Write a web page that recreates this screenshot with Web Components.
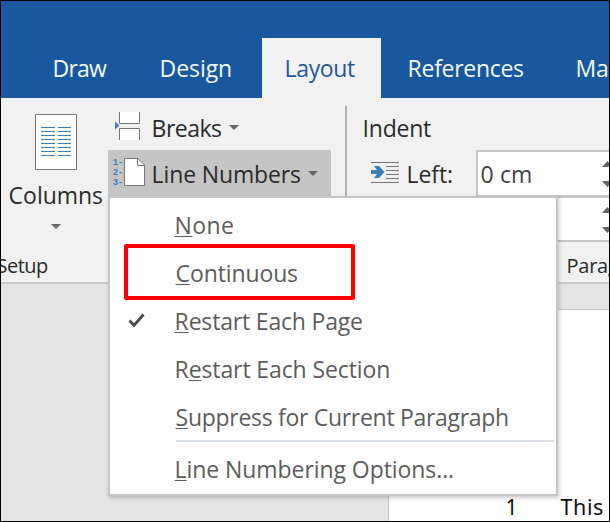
<!DOCTYPE html>
<html lang="en"><head><meta charset="utf-8"><title>Layout ribbon</title>
<style>html,body{margin:0;height:522px;overflow:hidden;background:#000}</style></head><body>
<word-window></word-window>
<script>
const define=(name,html,setup)=>customElements.define(name,class extends HTMLElement{
  connectedCallback(){
    if(this.shadowRoot)return;
    const t=document.createElement('template');t.innerHTML=html;
    this.attachShadow({mode:'open'}).append(t.content.cloneNode(true));
    if(setup)setup(this,this.shadowRoot);
  }
});
const pen=document.createElement('canvas').getContext('2d');

/* Text label: "ink" is the drawn width, "size" the font size, "line" the line height */
define('fit-label',`<style>:host{display:block;flex:none;white-space:pre;font-family:"Open Sans","Noto Sans",sans-serif}span{display:block}</style><span><slot></slot></span>`,(h,r)=>{
  const size=+h.getAttribute('size')||23,ink=+h.getAttribute('ink'),text=h.textContent;
  const span=r.querySelector('span');
  const family=h.getAttribute('face')||'"Open Sans","Noto Sans",sans-serif';
  pen.font=size+'px '+family;
  const m=pen.measureText(text),drawn=m.actualBoundingBoxRight+m.actualBoundingBoxLeft;
  span.style.cssText=`font:${size}px/${h.getAttribute('line')||48}px ${family};margin-left:${m.actualBoundingBoxLeft+.6}px;letter-spacing:${(ink-drawn-.5)/(text.length-1||1)}px`;
  h.style.width=ink+'px';
});
define('drop-arrow',`<style>:host{display:block;flex:none;width:10px;height:5px}svg{display:block}</style><svg width="10" height="5"><path d="M0 0H10L5 5Z" fill="#666"/></svg>`);
define('ribbon-tab',`<style>:host{display:block;box-sizing:border-box;flex:none;height:60px;color:#f4f8fd;padding-top:6px}:host([active]){background:#f2f2f2;color:#1f58a0}</style><slot></slot>`);
define('tab-strip',`<style>:host{display:flex;height:97px;box-sizing:border-box;padding-top:37px;background:#19589f;overflow:hidden}
ribbon-tab{padding-left:25px}.a{width:107px;margin-left:28px}.b{width:126px}.c{width:119px;padding-left:24px}.d{width:168px;padding-left:28px}</style>
<ribbon-tab class="a"><fit-label ink="53">Draw</fit-label></ribbon-tab><ribbon-tab class="b"><fit-label ink="70">Design</fit-label></ribbon-tab><ribbon-tab class="c" active><fit-label ink="69">Layout</fit-label></ribbon-tab><ribbon-tab class="d"><fit-label ink="114">References</fit-label></ribbon-tab><ribbon-tab style="padding-left:28px"><fit-label ink="84">Mailings</fit-label></ribbon-tab>`);
define('columns-button',`<style>:host{display:flex;flex-direction:column;width:107px;flex:none;padding-top:16px}svg{margin-left:34px;flex:none}fit-label{margin:1px 0 0 8px}drop-arrow{margin:5px 0 0 50px}</style>
<svg width="42" height="56"><path d="M.5 .5h41v55h-41z" fill="#fff" stroke="#777"/><path d="M6 13.5h14m3 0h13M6 17.5h14m3 0h13M6 21.5h14m3 0h13M6 25.5h14m3 0h13M6 29.5h14m3 0h13M6 33.5h14m3 0h13M6 37.5h14m3 0h13M6 41.5h14m3 0h13" stroke="#3b7fb9"/></svg>
<fit-label ink="93">Columns</fit-label><drop-arrow></drop-arrow>`);
define('ribbon-button',`<style>:host{display:flex;height:46px;width:223px;position:relative}:host([pressed]){background:#c5c5c5}slot[name=icon]{display:block;width:45px;flex:none}::slotted(svg){display:block;margin-right:1px}drop-arrow{margin:21px 0 0 8px}</style><slot name="icon"></slot><slot></slot><drop-arrow></drop-arrow>`);
define('number-field',`<style>:host{display:flex;box-sizing:border-box;height:47px;width:133px;flex:none;border:2px solid #c6c6c6;border-right:0;background:#fefefe;color:#444}svg{flex:none;margin:9px 0 0 auto}</style><slot></slot><svg width="7" height="27"><path d="M0 6L5.5 0L11 6ZM0 20H11L5.5 26Z" fill="#666"/></svg>`);
define('ribbon-body',`<style>:host{display:grid;grid-template-columns:344px 2px 1fr;height:184px;background:#f1f1f1;border-bottom:2px solid #cbcbcb;color:#2b2b2b;overflow:hidden}
section{display:grid;grid-template-rows:144px 40px;overflow:hidden;min-width:0}.row{display:flex}.stack{padding-top:6px}i{background:#b1b1b1;margin-top:8px}
.setup{margin-left:-4px}.indent{padding-left:17px}.field{display:flex;height:46px}.field svg{margin:12px 0 0 24px;flex:none}.field fit-label{margin-left:9px}.field number-field{margin-left:24px}.field number-field fit-label{margin:-2px 0 0 3px}.second{margin-left:129px;height:46px}.head{height:46px}</style>
<section><div class="row"><columns-button></columns-button><div class="stack">
<ribbon-button><svg slot="icon" width="44" height="46"><path d="M11.5 8v11.5h20V8M11.5 36V24.500h20V36" fill="#fefefe" stroke="#777"/><path d="M7 17.500L11.500 21.500L7 25.500Z" fill="#3b7fb9"/></svg><fit-label ink="68">Breaks</fit-label></ribbon-button>
<ribbon-button pressed><svg slot="icon" width="44" height="46"><g fill="#3b7fb9" font-family="Liberation Sans" font-size="9" font-weight="700"><text x="5" y="14.500" textLength="9">1-</text><text x="5" y="24.700" textLength="9">2-</text><text x="5" y="34.900" textLength="9">3-</text></g><path d="M16.500 8.500H30L36.500 15V35.500H16.500Z" fill="#fefefe" stroke="#777"/><path d="M29.500 8.500V15.500H36.500" fill="none" stroke="#777"/></svg><fit-label ink="147">Line Numbers</fit-label></ribbon-button>
</div></div><fit-label class="setup" size="20" ink="51" line="48">Setup</fit-label></section>
<i></i>
<section><div class="stack"><div class="head"><fit-label class="indent" ink="67">Indent</fit-label></div>
<div class="field"><svg width="28" height="21"><path d="M0 .5h28M15 4.500h13M15 8.500h13M15 12.500h13M15 16.500h13M0 20.500h28" stroke="#777"/><path d="M0 8H6L3 4H8L13.500 10L8 16H3L6 12H0Z" fill="#3b7fb9"/></svg><fit-label ink="44">Left:</fit-label><number-field><fit-label ink="50">0 cm</fit-label></number-field></div>
<number-field class="second"></number-field></div><fit-label style="padding-left:220px" size="20" ink="93" line="48">Paragraph</fit-label></section>`);
define('document-area',`<style>:host{display:flex;height:237px;background:#e4e4e4;padding:25px 0 0 387px;box-sizing:border-box}article{flex:1;box-sizing:border-box;background:#fefefe;border:solid #c6c6c6;border-width:1px 0 0 1px;padding:173px 0 0 117px;color:#111;display:flex;gap:45px;overflow:hidden}</style><article><fit-label face="'Noto Sans',sans-serif" size="21" ink="9" line="48">1</fit-label><fit-label size="21.500" ink="43" face="'Noto Sans',sans-serif" line="48">This</fit-label></article>`);
define('menu-item',`<style>:host{display:grid;grid-template-columns:66px 1fr;height:48px;color:#5d5d5d}svg{margin:16px 0 0 18px;visibility:hidden}:host([checked]) svg{visibility:visible}</style><svg width="18" height="16"><path d="M1.500 7.500L6 12.500L15.500 1.500" fill="none" stroke="#4a4a4a" stroke-width="2.800"/></svg><slot></slot>`);
define('drop-menu',`<style>:host{display:block;position:absolute;left:108px;top:196px;width:450px;height:300px;box-sizing:border-box;border:2px solid #c6c6c6;background:#fefefe;padding-top:3px;box-shadow:1px 2px 4px #0003}hr{border:0;height:2px;background:#dce1e8;margin:-1px 2px 3px 66px}u{text-decoration:underline 1px;text-underline-offset:2px;text-decoration-skip-ink:none}</style>
<menu-item><fit-label ink="57"><u>N</u>one</fit-label></menu-item><menu-item><fit-label ink="121"><u>C</u>ontinuous</fit-label></menu-item><menu-item checked><fit-label ink="186"><u>R</u>estart Each Page</fit-label></menu-item><menu-item><fit-label ink="213">R<u>e</u>start Each Section</fit-label></menu-item><menu-item><fit-label ink="332"><u>S</u>uppress for Current Paragraph</fit-label></menu-item><hr><menu-item><fit-label ink="277"><u>L</u>ine Numbering Options...</fit-label></menu-item>`);
define('highlight-box',`<style>:host{display:block;position:absolute;left:124px;top:244px;width:231px;height:56px;box-sizing:border-box;border:4px solid #fe0000;border-radius:2px}</style>`);
define('word-window',`<style>:host{display:block;position:relative;width:610px;height:522px;box-sizing:border-box;border:1px solid #000;overflow:hidden}drop-menu{margin:-1px}highlight-box{margin:-1px}</style><tab-strip></tab-strip><ribbon-body></ribbon-body><document-area></document-area><drop-menu></drop-menu><highlight-box></highlight-box>`);
</script></body></html>
